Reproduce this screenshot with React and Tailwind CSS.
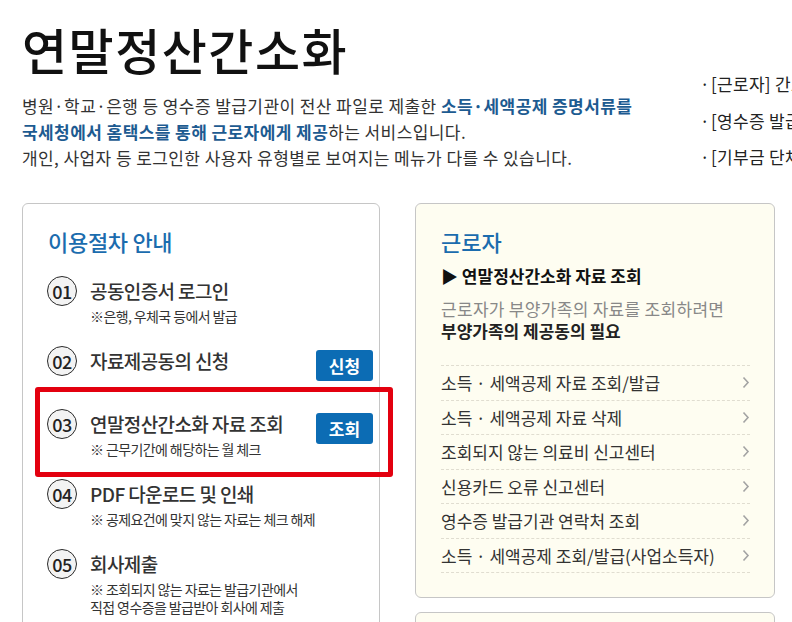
// 연말정산간소화 — landing section
import React from 'react';

const FONT = { fontFamily: "'Noto Sans CJK KR', 'Noto Sans', sans-serif" };

const STEPS = [
  { no: '01', title: '공동인증서 로그인', sub: ['※은행, 우체국 등에서 발급'] },
  { no: '02', title: '자료제공동의 신청', btn: '신청' },
  { no: '03', title: '연말정산간소화 자료 조회', sub: ['※ 근무기간에 해당하는 월 체크'], btn: '조회', mark: true },
  { no: '04', title: 'PDF 다운로드 및 인쇄', sub: ['※ 공제요건에 맞지 않는 자료는 체크 해제'] },
  { no: '05', title: '회사제출', sub: ['※ 조회되지 않는 자료는 발급기관에서', '직접 영수증을 발급받아 회사에 제출'] },
];

const LINKS = [
  '소득 · 세액공제 자료 조회/발급',
  '소득 · 세액공제 자료 삭제',
  '조회되지 않는 의료비 신고센터',
  '신용카드 오류 신고센터',
  '영수증 발급기관 연락처 조회',
  '소득 · 세액공제 조회/발급(사업소득자)',
];

function Chevron() {
  return (
    <svg width="8" height="13" viewBox="0 0 8 13" fill="none" stroke="#a3a3a3" strokeWidth="1.6">
      <path d="M1.5 1.5l4.5 5-4.5 5" />
    </svg>
  );
}

function StepRow({ step }) {
  return (
    <div>
      {/* fixed row height; the button hangs a little lower than the title */}
      <div className="flex items-start justify-between h-[30px]">
        <div className="flex items-center h-[30px]">
          <div className="w-[30px] h-[30px] rounded-full border-[1.5px] border-[#2a2a2a] bg-[#f3f3f3] flex items-center justify-center text-[18px] font-medium tracking-[-0.5px] text-[#222]">
            {step.no}
          </div>
          <div className="ml-[13px] text-[19px] leading-[30px] font-medium tracking-[-0.6px] text-[#333]">{step.title}</div>
        </div>
        {step.btn && (
          <div className="mt-[4px] w-[57px] h-[31px] shrink-0 rounded-[3px] bg-[#0c6cb4] text-white text-[17px] font-bold flex items-center justify-center">
            {step.btn}
          </div>
        )}
      </div>
      {step.sub && (
        <div className="mt-[1px] pl-[43px] text-[14px] leading-[18px] tracking-[-0.6px] text-[#333]">
          {step.sub.map((s) => <div key={s}>{s}</div>)}
        </div>
      )}
    </div>
  );
}

export default function App() {
  const [s1, s2, s3, s4, s5] = STEPS;
  return (
    <div className="w-[792px] h-[622px] overflow-hidden bg-white" style={FONT}>
      <div className="w-[1100px]">
        {/* top intro */}
        <div className="flex h-[171px]">
          <div className="pl-[22px] w-[700px]">
            <h1 className="mt-[21px] text-[49px] leading-[56px] font-medium tracking-[1.5px] text-[#111]">연말정산간소화</h1>
            <div className="mt-[16px] text-[17px] leading-[26px] text-[#333] tracking-[0.42px]">
              <p>
                병원·학교·은행 등 영수증 발급기관이 전산 파일로 제출한{' '}
                <b className="text-[#1d5b91] font-bold">소득·세액공제 증명서류를</b>
              </p>
              <p>
                <b className="text-[#1d5b91] font-bold">국세청에서 홈택스를 통해 근로자에게 제공</b>하는 서비스입니다.
              </p>
              <p>개인, 사업자 등 로그인한 사용자 유형별로 보여지는 메뉴가 다를 수 있습니다.</p>
            </div>
          </div>
          <ul className="mt-[66px] text-[17px] leading-[36.5px] text-[#222] whitespace-nowrap tracking-[0.3px]">
            <li className="flex"><span className="w-[11px]">·</span>[근로자] 간소화자료 일괄제공 서비스</li>
            <li className="flex"><span className="w-[11px]">·</span>[영수증 발급기관] 자료제출</li>
            <li className="flex"><span className="w-[11px]">·</span>[기부금 단체] 기부금 자료 제출</li>
          </ul>
        </div>

        {/* cards */}
        <div className="mt-[32px] pl-[22px] flex gap-[35px] items-start">
          <div className="w-[358px] h-[440px] border border-[#c6c6c6] rounded-[6px]">
            <h2 className="pt-[22px] pl-[25px] text-[22px] leading-[30px] font-medium text-[#1b6cae] tracking-[-0.3px]">이용절차 안내</h2>
            <div className="mt-[20px] pl-[24px] pr-[6px]"><StepRow step={s1} /></div>
            <div className="mt-[21px] pl-[24px] pr-[6px]"><StepRow step={s2} /></div>
            <div className="mt-[11px] ml-[12px] w-[358px] border-[5px] border-[#e3000f] rounded-[3px] pt-[17px] pb-[14px] pl-[7px] pr-[15px]">
              <StepRow step={s3} />
            </div>
            <div className="mt-[2px] pl-[24px] pr-[6px]"><StepRow step={s4} /></div>
            <div className="mt-[21px] pl-[24px] pr-[6px]"><StepRow step={s5} /></div>
          </div>

          <div className="flex flex-col gap-[14px]">
            <div className="w-[360px] h-[395px] border border-[#c6c6c6] rounded-[6px] bg-[#fefdf1] pl-[25px] pr-[24px]">
              <h2 className="pt-[22px] text-[22px] leading-[30px] font-medium text-[#1b6cae]">근로자</h2>
              <div className="mt-[7px] text-[17px] leading-[26px] font-bold text-[#111]">▶ 연말정산간소화 자료 조회</div>
              <div className="mt-[9px] text-[17px] leading-[22px] text-[#888] tracking-[0.3px]">근로자가 부양가족의 자료를 조회하려면</div>
              <div className="text-[17px] leading-[22px] font-bold text-[#222]">부양가족의 제공동의 필요</div>
              <ul className="mt-[23px] border-t border-dashed border-[#e0ddd0]">
                {LINKS.map((l) => (
                  <li key={l} className="h-[34.5px] border-b border-dashed border-[#e0ddd0] flex items-center justify-between text-[17px] text-[#333]">
                    <span>{l}</span>
                    <Chevron />
                  </li>
                ))}
              </ul>
            </div>
            <div className="w-[360px] h-[200px] border border-[#c6c6c6] rounded-[6px] bg-[#fefdf1]" />
          </div>
        </div>
      </div>
    </div>
  );
}
